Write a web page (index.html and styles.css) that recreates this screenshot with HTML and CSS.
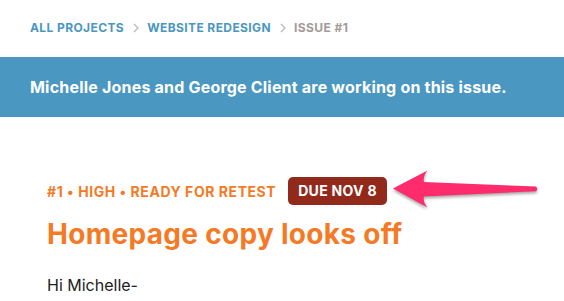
FILE: index.html
```html
<!DOCTYPE html>
<html>
<head>
  <title>Issue #1 - Website Redesign</title>
  <link rel="stylesheet" href="styles.css">
</head>
<body>
  <nav class="crumbs">
    <a href="#">All Projects</a>
    <svg class="sep" width="6" height="10" viewBox="0 0 6 10"><path d="M1 1l4 4-4 4" fill="none" stroke="#bdb8b4" stroke-width="1.3"/></svg>
    <a href="#">Website Redesign</a>
    <svg class="sep" width="6" height="10" viewBox="0 0 6 10"><path d="M1 1l4 4-4 4" fill="none" stroke="#bdb8b4" stroke-width="1.3"/></svg>
    <span class="current">Issue #1</span>
  </nav>

  <div class="banner">Michelle Jones and George Client are working on this issue.</div>

  <main class="issue">
    <div class="meta">
      <span class="tags">#1 &bull; High &bull; Ready for Retest</span>
      <span class="due">Due Nov 8</span>
    </div>
    <h1 class="title">Homepage copy looks off</h1>
    <p class="body">Hi Michelle-</p>
  </main>

  <!-- annotation arrow pointing at the due badge -->
  <svg class="arrow" width="564" height="301" viewBox="0 0 564 301">
    <path d="M393,188.5 L427.5,170.5 Q422.5,177 424,182 L536,186.6 Q538.5,189 536,191.2 L424,196.5 Q422.5,201 427.5,207.5 Z" fill="#fe2c6c"/>
  </svg>
</body>
</html>
```

FILE: styles.css
```css
body {
  margin: 0;
  font-family: Inter, "Noto Sans", sans-serif;
  color: #222;
  background: #fff;
}
.crumbs {
  padding: 20px 30px 21px;
  font-size: 12px;
  line-height: 16px;
  font-weight: 700;
  text-transform: uppercase;
  letter-spacing: 0.4px;
  display: flex;
  align-items: center;
  gap: 8.5px;
}
.crumbs a {
  color: #4a97c2;
  text-decoration: none;
}
.crumbs .current {
  color: #a39b97;
}
.banner {
  background: #4a98c1;
  color: #fff;
  padding: 20px 30px;
  font-size: 16px;
  line-height: 20px;
  font-weight: 700;
  letter-spacing: 0.2px;
}
.issue {
  padding: 60px 47px 0;
}
.meta {
  display: flex;
  align-items: center;
  gap: 12px;
}
.tags {
  color: #f47a26;
  font-size: 14px;
  font-weight: 700;
  text-transform: uppercase;
  letter-spacing: 0.55px;
}
.due {
  background: #922a1b;
  color: #fff;
  font-size: 14px;
  font-weight: 700;
  text-transform: uppercase;
  letter-spacing: 0.3px;
  line-height: 28px;
  padding: 0 10px;
  border-radius: 5px;
}
.title {
  margin: 12px 0 0;
  color: #f47a26;
  font-size: 28px;
  line-height: 34px;
  font-weight: 700;
  letter-spacing: 0.3px;
}
.body {
  margin: 22px 0 0;
  font-size: 16px;
  line-height: 24px;
}
.arrow {
  position: absolute;
  left: 0;
  top: 0;
  pointer-events: none;
  filter: drop-shadow(0 2px 1.5px rgba(0, 0, 0, 0.35));
}
```
